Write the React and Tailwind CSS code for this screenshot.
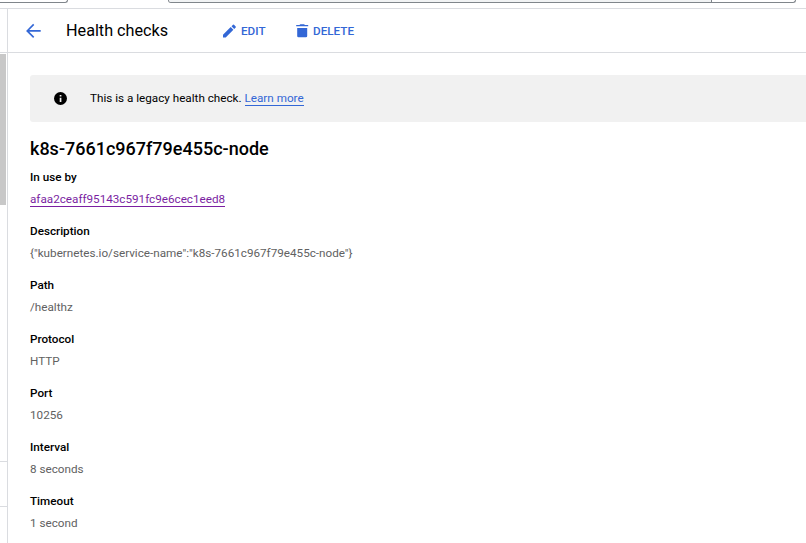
const fields = [
  { label: 'In use by', value: 'afaa2ceaff95143c591fc9e6cec1eed8', link: true },
  { label: 'Description', value: '{"kubernetes.io/service-name":"k8s-7661c967f79e455c-node"}' },
  { label: 'Path', value: '/healthz' },
  { label: 'Protocol', value: 'HTTP' },
  { label: 'Port', value: '10256' },
  { label: 'Interval', value: '8 seconds' },
  { label: 'Timeout', value: '1 second' },
];

function SearchStrip() {
  return (
    <div className="flex h-[9px] shrink-0 items-start border-b border-[#dadce0]">
      <div className="h-[3px] w-[68px] shrink-0 rounded-br-[3px] border-r border-b border-[#80868b]" />
      <div className="ml-[100px] flex h-[3px] w-[628px] shrink-0 overflow-hidden rounded-b-[3px] border-x border-b border-[#80868b]">
        <div className="w-[543px] border-r border-[#80868b] bg-[#f1f3f4]" />
      </div>
    </div>
  );
}

function Header() {
  return (
    <header className="flex h-[43px] w-full items-center text-[#3367d6]">
      <svg className="ml-[14px] size-6" viewBox="0 0 24 24" fill="none" stroke="currentColor" strokeWidth="1.6">
        <path d="M18.700 11.900H5.700M11.700 5.400L5.200 11.900l6.500 6.500" />
      </svg>
      <h1 className="ml-5 w-[156px] text-[16.200px] leading-6 text-black">Health checks</h1>
      <button className="flex w-[73px] items-center text-[11.700px] font-medium">
        <svg className="mr-[3px] size-4 shrink-0" viewBox="0 0 16 16" fill="currentColor">
          <path d="M1 11.700v2.700h2.700l7.700-7.700-2.700-2.700zM13.700 4.400a.8.8 0 0 0 0-1L12 1.700a.8.8 0 0 0-1 0L9.500 3.200 12.200 5.900z" />
        </svg>
        <span className="leading-4">EDIT</span>
      </button>
      <button className="flex items-center text-[11.700px] font-medium">
        <svg className="mr-[2px] size-4 shrink-0" viewBox="0 0 16 16" fill="currentColor">
          <path d="M2.200 5h10v7.900a1.300 1.300 0 0 1-1.300 1.300H3.500a1.300 1.300 0 0 1-1.300-1.300zM1.200 2h3.300l.8-.8h3.800l.8.8h3.300v1.300h-12z" />
        </svg>
        <span className="leading-4">DELETE</span>
      </button>
    </header>
  );
}

export default function App() {
  return (
    <div className="flex h-[543px] w-[806px] flex-col overflow-hidden bg-white font-[Roboto,sans-serif] text-black">
      <SearchStrip />
      <div className="flex h-[44px] shrink-0 border-b border-[#dadce0]">
        <div className="w-2 shrink-0 border-r border-[#dadce0]" />
        <Header />
      </div>
      <div className="flex min-h-0 flex-1">
        <aside className="flex w-2 shrink-0 flex-col border-r border-[#dadce0]">
          <div className="mt-px h-[151px] w-[6px] bg-[#c8c8c8]" />
          <div className="h-[257px] border-b border-[#dadce0]" />
          <div className="h-[45px] border-b border-[#dadce0]" />
        </aside>
        <main className="flex min-w-0 flex-1 flex-col pt-[22px] pl-[22px]">
          <div className="flex h-[47px] shrink-0 items-center rounded-l-[3px] bg-[#f1f1f1] text-[11.700px]">
            <svg className="ml-6 size-[13px] shrink-0" viewBox="0 0 13 13">
              <circle cx="6.500" cy="6.500" r="6.500" fill="#000" />
              <path d="M5.700 5.700h1.700V10H5.700zM5.700 3h1.700v1.600H5.700z" fill="#f1f1f1" />
            </svg>
            <p className="mb-[2px] ml-[23px] leading-4">
              This is a legacy health check.{' '}
              <a className="inline-block h-4 border-b border-[#3367d6] text-[#3367d6]">Learn more</a>
            </p>
          </div>
          <h2 className="mt-[15px] h-6 shrink-0 text-lg leading-6 font-medium">k8s-7661c967f79e455c-node</h2>
          <dl className="mt-2 text-[11.700px]">
            {fields.map((f) => (
              <div key={f.label} className="flex h-[54px] flex-col items-start">
                <dt className="h-[22px] leading-4 font-medium">{f.label}</dt>
                <dd className="leading-4 text-[#616161]">
                  {f.link ? <a className="block h-4 border-b border-[#7b1fa2] text-[#7b1fa2]">{f.value}</a> : f.value}
                </dd>
              </div>
            ))}
          </dl>
        </main>
      </div>
    </div>
  );
}
